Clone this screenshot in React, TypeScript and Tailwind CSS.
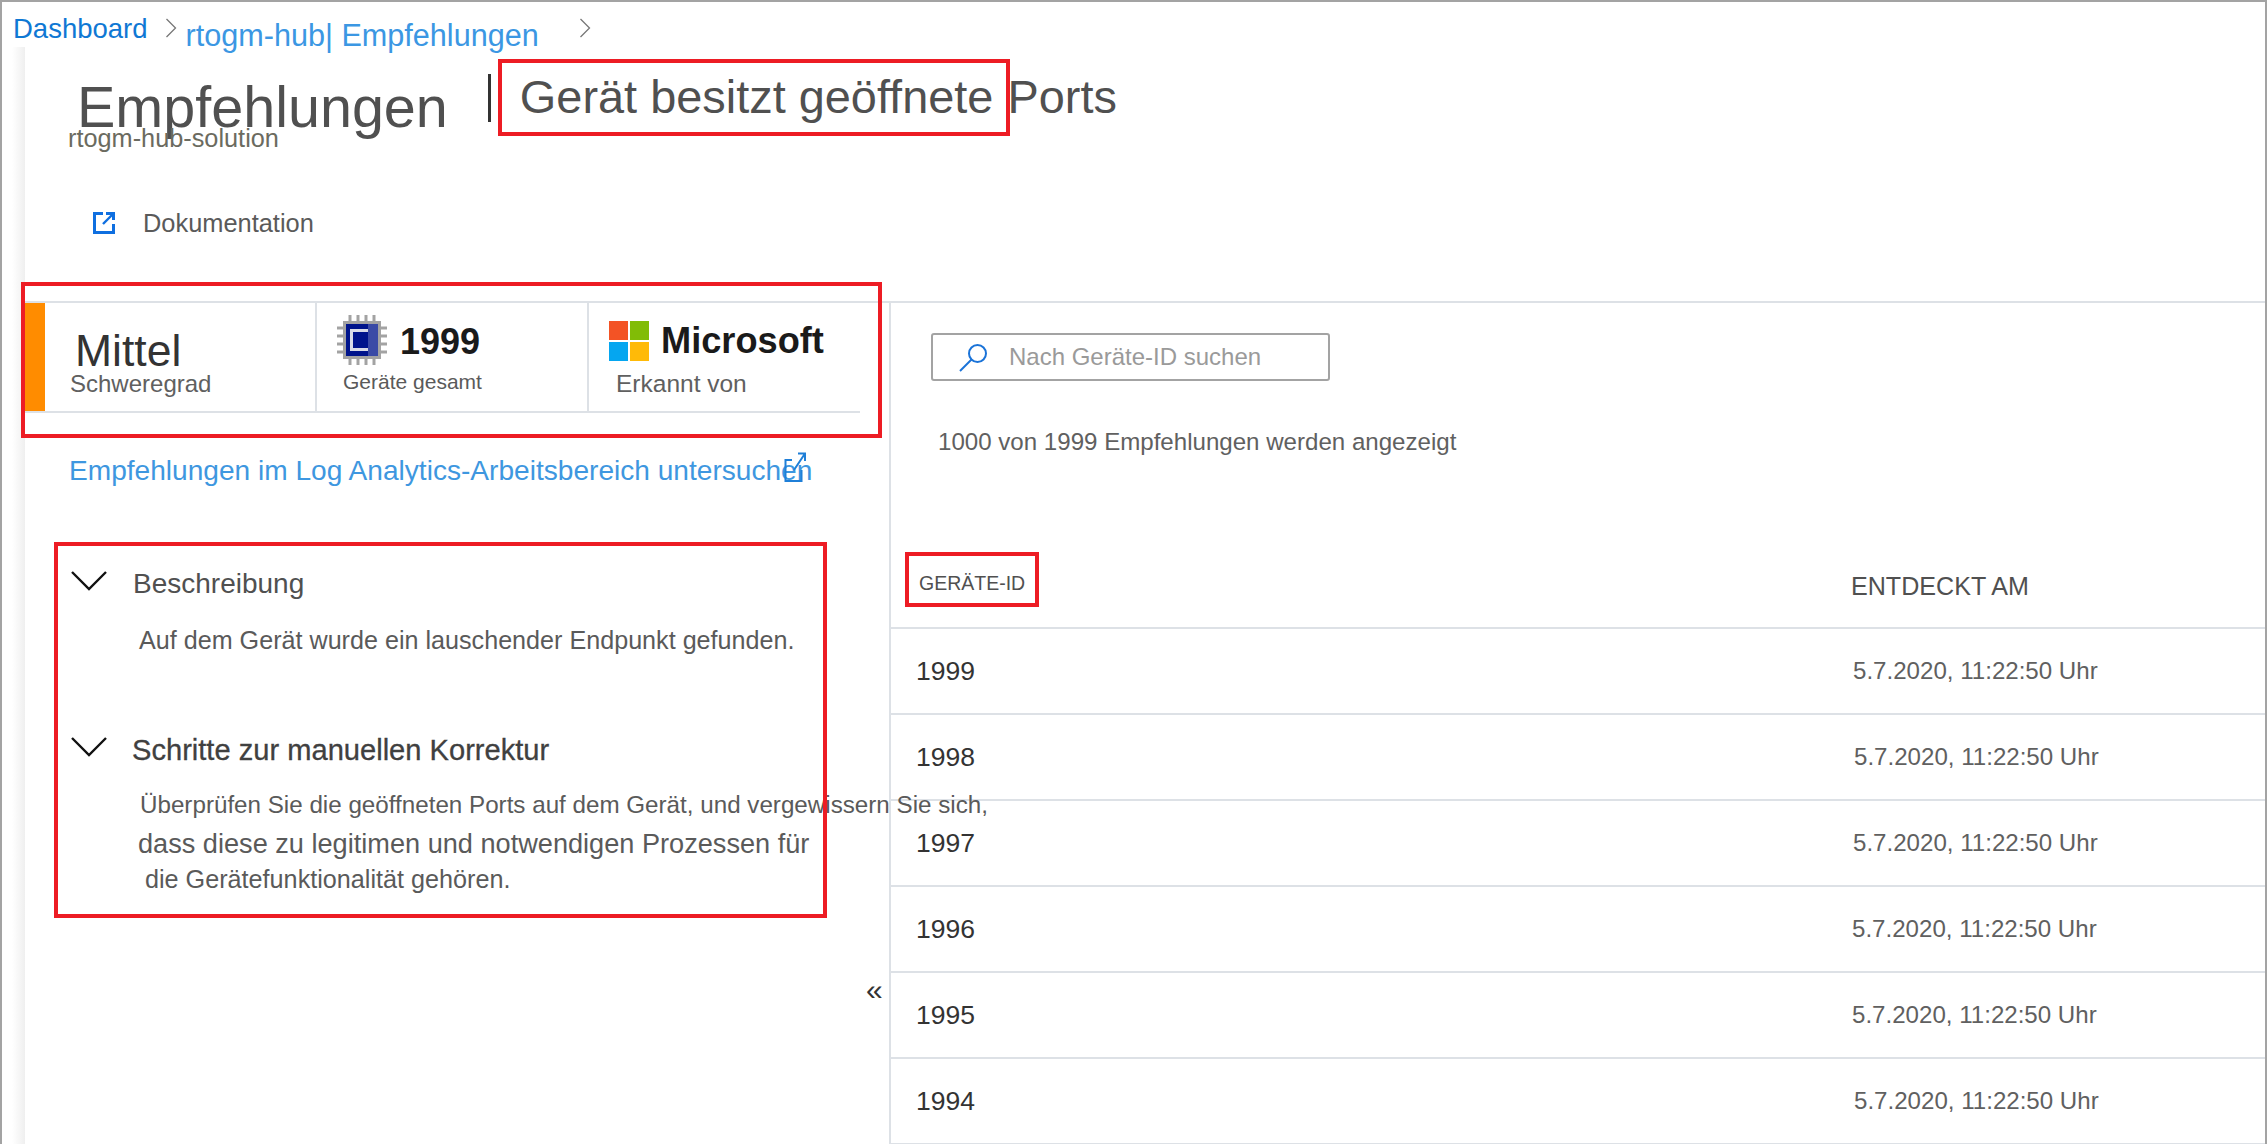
import { ReactNode } from "react";

const ROWS = [
  { id: "1999", dateClass: "ml-[0px]" },
  { id: "1998", dateClass: "ml-[1px]" },
  { id: "1997", dateClass: "ml-[0px]" },
  { id: "1996", dateClass: "ml-[-1px]" },
  { id: "1995", dateClass: "ml-[-1px]" },
  { id: "1994", dateClass: "ml-[1px]" },
];

function Crumb() {
  return (
    <svg width="12" height="20" viewBox="0 0 12 20" fill="none" stroke="#777" strokeWidth="1.3">
      <path d="M1.5 1l9 9-9 9" />
    </svg>
  );
}

function Caret() {
  return (
    <svg width="36" height="20" viewBox="0 0 36 20" fill="none" stroke="#111" strokeWidth="2.4">
      <path d="M1 1l17 17L35 1" />
    </svg>
  );
}

function OpenIcon() {
  return (
    <svg width="22" height="22" viewBox="0 0 22 22" fill="none" stroke="#0f6fe0">
      <path d="M10 1.5H1.5v19h19V12" strokeWidth="3" />
      <path d="M10 12L20 2" strokeWidth="2.4" />
      <path d="M13 1.5h7.5V8" strokeWidth="3" />
    </svg>
  );
}

function ChipIcon() {
  return (
    <svg width="50" height="50" viewBox="0 0 50 50">
      <g stroke="#a3a3a3" strokeWidth="3">
        <path d="M13 0v8M21 0v8M29 0v8M37 0v8M13 42v8M21 42v8M29 42v8M37 42v8" />
        <path d="M0 13h8M0 21h8M0 29h8M0 37h8M42 13h8M42 21h8M42 29h8M42 37h8" />
      </g>
      <rect x="6" y="6" width="38" height="38" fill="#a3a3a3" />
      <rect x="9" y="9" width="32" height="32" fill="#00148c" />
      <rect x="13" y="14" width="20" height="22" fill="#d8dbe8" />
      <rect x="16" y="17" width="15" height="16" fill="#00148c" />
      <rect x="31" y="9" width="10" height="32" fill="#3a4aa6" />
    </svg>
  );
}

function MicrosoftLogo() {
  return (
    <div className="grid h-[40px] w-[40px] grid-cols-2 gap-[2px]">
      <div className="bg-[#f35325]" />
      <div className="bg-[#81bc06]" />
      <div className="bg-[#05a6f0]" />
      <div className="bg-[#ffba08]" />
    </div>
  );
}

function RedBox({ className }: { className: string }) {
  return <div className={`pointer-events-none absolute border-[4px] border-[#ed1c24] ${className}`} />;
}

function Section({ title, titleClass, children }: { title: string; titleClass: string; children: ReactNode }) {
  return (
    <section>
      <div className="flex items-start pl-[46px]">
        <div className="mt-[3px]">
          <Caret />
        </div>
        <h3 className={`leading-[32px] ${titleClass}`}>{title}</h3>
      </div>
      {children}
    </section>
  );
}

export default function App() {
  return (
    <div className="relative h-[1144px] w-[2267px] overflow-hidden border-x-2 border-t-2 border-[#a3a3a3] bg-white font-['Liberation_Sans',sans-serif]">
      <nav className="relative z-10 flex h-[45px] items-start pl-[11px]">
        <a className="mt-[12px] text-[27.5px] leading-[30px] text-[#0f78d4]">Dashboard</a>
        <span className="ml-[17px] mt-[16px]">
          <Crumb />
        </span>
        <a className="ml-[9px] mt-[18px] text-[30.6px] leading-[30px] text-[#3b97e3]">rtogm-hub| Empfehlungen</a>
        <span className="ml-[40px] mt-[16px]">
          <Crumb />
        </span>
      </nav>

      <div className="flex h-[1097px] pl-[10px]">
        <div className="w-[13px] shrink-0 bg-linear-to-r from-white to-[#efefef]" />
        <div className="min-w-0 flex-1 bg-white">
          <header className="h-[254px]">
            <div className="flex items-start">
              <div className="ml-[52px] mt-[28px]">
                <h1 className="text-[57.5px] leading-[64px] text-[#505050]">Empfehlungen</h1>
                <p className="ml-[-9px] mt-[-16px] text-[25.3px] leading-[30px] text-[#6b6b60]">rtogm-hub-solution</p>
              </div>
              <div className="ml-[40px] mt-[27px] h-[48px] w-[3px] bg-[#333]" />
              <h2 className="ml-[29px] mt-[22px] text-[46.9px] leading-[56px] text-[#505050]">
                Gerät besitzt geöffnete<span className="ml-[14px]">Ports</span>
              </h2>
            </div>
            <a className="ml-[68px] mt-[55px] flex items-center">
              <OpenIcon />
              <span className="ml-[28px] text-[25.4px] leading-[30px] text-[#5a5a5a]">Dokumentation</span>
            </a>
          </header>

          <main className="flex h-[843px] border-t-2 border-[#dde1e6]">
            <aside className="relative w-[866px] shrink-0 border-r-2 border-[#dde1e6]">
              <div className="flex h-[110px] w-[835px] border-b-2 border-[#dde1e6]">
                <div className="w-[20px] bg-[#ff8c00]" />
                <div className="w-[272px] border-r-2 border-[#dde1e6] pl-[25px] pt-[27px]">
                  <div className="ml-[5px] text-[44.5px] leading-[42px] text-[#333]">Mittel</div>
                  <div className="mt-[-2px] text-[24px] leading-[28px] text-[#606060]">Schweregrad</div>
                </div>
                <div className="w-[272px] border-r-2 border-[#dde1e6] pl-[20px] pt-[12px]">
                  <div className="flex items-start">
                    <ChipIcon />
                    <span className="ml-[13px] mt-[6px] text-[36px] font-bold leading-[42px] text-[#1a1a1a]">1999</span>
                  </div>
                  <div className="ml-[6px] mt-[5px] text-[21px] leading-[24px] text-[#5a5a5a]">Geräte gesamt</div>
                </div>
                <div className="pl-[20px] pt-[18px]">
                  <div className="flex items-center">
                    <MicrosoftLogo />
                    <span className="ml-[12px] text-[36.2px] font-bold leading-[40px] text-[#1a1a1a]">Microsoft</span>
                  </div>
                  <div className="ml-[7px] mt-[9px] text-[24.5px] leading-[28px] text-[#606060]">Erkannt von</div>
                </div>
              </div>

              <a className="relative ml-[44px] mt-[42px] block w-fit text-[28.1px] leading-[32px] text-[#3e97e0]">
                Empfehlungen im Log Analytics-Arbeitsbereich untersuchen
                <svg className="absolute right-[6px] top-[-3px]" width="22" height="30" viewBox="0 0 22 30" fill="none" stroke="#1f7fd8" strokeWidth="2">
                  <path d="M8 8H1.5v21H17.5V18" />
                  <path d="M10 18L21 1.5M14 1.5h7V9" />
                </svg>
              </a>

              <div className="mt-[81px]">
                <Section title="Beschreibung" titleClass="ml-[26px] text-[28px] text-[#505050]">
                  <p className="ml-[114px] mt-[25px] text-[25.15px] leading-[30px] text-[#5a5a5a]">
                    Auf dem Gerät wurde ein lauschender Endpunkt gefunden.
                  </p>
                </Section>
                <div className="mt-[79px]">
                  <Section title="Schritte zur manuellen Korrektur" titleClass="ml-[25px] text-[29.1px] text-[#404040] [-webkit-text-stroke:0.3px_#404040]">
                    <p className="ml-[115px] mt-[24px] whitespace-nowrap text-[24.2px] leading-[30px] text-[#5a5a5a]">
                      Überprüfen Sie die geöffneten Ports auf dem Gerät, und vergewissern Sie sich,
                    </p>
                    <p className="ml-[113px] mt-[8px] text-[27.15px] leading-[32px] text-[#5a5a5a]">
                      dass diese zu legitimen und notwendigen Prozessen für
                    </p>
                    <p className="ml-[120px] mt-[4px] text-[25.2px] leading-[30px] text-[#5a5a5a]">
                      die Gerätefunktionalität gehören.
                    </p>
                  </Section>
                </div>
              </div>

              <span className="absolute left-[841px] top-[670px] text-[30px] leading-[34px] text-[#333]">«</span>
            </aside>

            <div className="min-w-0 flex-1">
              <div className="ml-[40px] mt-[30px] flex h-[48px] w-[399px] items-center rounded-[3px] border-2 border-[#a3a3a3] pl-[26px]">
                <svg width="29" height="29" viewBox="0 0 29 29" fill="none" stroke="#1a73d8" strokeWidth="2">
                  <circle cx="18.5" cy="10.5" r="8.5" />
                  <path d="M12.5 16.5L1 28" />
                </svg>
                <span className="ml-[21px] text-[24px] leading-[30px] text-[#9a9a9a]">Nach Geräte-ID suchen</span>
              </div>
              <p className="ml-[47px] mt-[46px] text-[24.1px] leading-[30px] text-[#606060]">1000 von 1999 Empfehlungen werden angezeigt</p>
              <div className="mt-[114px] flex h-[58px] border-b-2 border-[#dde1e6] text-[#505050]">
                <div className="ml-[28px] w-[932px] text-[19.5px] leading-[24px]">GERÄTE-ID</div>
                <div className="mt-[1px] text-[25.1px] leading-[28px]">ENTDECKT AM</div>
              </div>
              {ROWS.map((row) => (
                <div key={row.id} className="flex h-[86px] items-center border-b-2 border-[#dde1e6] pt-[1px]">
                  <div className="ml-[25px] w-[937px] text-[26.5px] text-[#333]">{row.id}</div>
                  <div className={`text-[24.1px] text-[#606060] ${row.dateClass}`}>5.7.2020, 11:22:50 Uhr</div>
                </div>
              ))}
            </div>
          </main>
        </div>
      </div>

      <RedBox className="left-[496px] top-[57px] h-[77px] w-[512px]" />
      <RedBox className="left-[19px] top-[280px] h-[156px] w-[861px]" />
      <RedBox className="left-[52px] top-[540px] h-[376px] w-[773px]" />
      <RedBox className="left-[903px] top-[550px] h-[55px] w-[134px]" />
    </div>
  );
}
